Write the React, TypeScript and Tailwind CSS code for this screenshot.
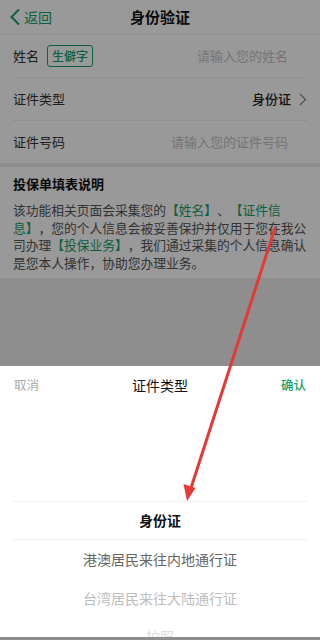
import React from "react";

const G = "text-[#16a06a]";

export default function App() {
  return (
    <div
      className="relative w-[320px] h-[640px] overflow-hidden bg-[#ededed] [text-spacing-trim:space-all]"
      style={{ fontFamily: '"Noto Sans CJK SC", "Noto Sans", sans-serif' }}
    >
      {/* Page */}
      <div className="bg-white">
        <div className="relative h-[35px] flex items-center border-b border-[#eeeeee]">
          <div className={`flex items-center pl-[9px] ${G}`}>
            <svg width="12" height="18" viewBox="0 0 12 18" fill="none">
              <path d="M10 1.5L2.5 9L10 16.5" stroke="#16a06a" strokeWidth="2" />
            </svg>
            <span className="ml-[3px] text-[14px] leading-none">返回</span>
          </div>
          <div className="absolute left-0 right-0 text-center text-[15px] font-bold text-[#111] pointer-events-none">
            身份验证
          </div>
        </div>
        <div className="px-[13px]">
          <div className="h-[43px] flex items-center border-b border-[#eeeeee]">
            <span className="text-[13px] text-[#333]">姓名</span>
            <span className={`ml-[8px] h-[22px] w-[46px] flex items-center justify-center border border-[#16a06a] rounded-[3px] text-[12px] font-medium ${G}`}>
              生僻字
            </span>
            <span className="ml-auto mr-[19px] text-[13px] text-[#c4c4c4]">请输入您的姓名</span>
          </div>
          <div className="h-[43px] flex items-center border-b border-[#eeeeee]">
            <span className="text-[13px] text-[#333]">证件类型</span>
            <span className="ml-auto text-[13px] font-medium text-[#222]">身份证</span>
            <svg className="ml-[8px]" width="8" height="13" viewBox="0 0 8 13" fill="none">
              <path d="M1 1L6.5 6.5L1 12" stroke="#888" strokeWidth="1.2" />
            </svg>
          </div>
          <div className="h-[42px] flex items-center">
            <span className="text-[13px] text-[#333]">证件号码</span>
            <span className="ml-auto mr-[19px] text-[13px] text-[#c4c4c4]">请输入您的证件号码</span>
          </div>
        </div>
      </div>
      <div className="h-[4px]" />
      <div className="bg-white px-[13px] pt-[8px] pb-[7px]">
        <div className="text-[13px] leading-[18px] font-bold text-[#111]">投保单填表说明</div>
        <p className="mt-[8px] text-[12.75px] leading-[17.5px] text-[#555]">
          该功能相关页面会采集您的<span className={G}>【姓名】</span>、<span className={G}>【证件信息】</span>，您的个人信息会被妥善保护并仅用于您在我公司办理<span className={G}>【投保业务】</span>，我们通过采集的个人信息确认是您本人操作，协助您办理业务。
        </p>
      </div>

      {/* Dim overlay */}
      <div className="absolute inset-0 bg-black/40" />

      {/* Bottom sheet */}
      <div className="absolute left-0 right-0 top-[366px] bottom-[3px] bg-white overflow-hidden">
        <div className="relative h-[38px] flex items-center justify-between px-[14px]">
          <span className="text-[12.5px] text-[#aaaaaa]">取消</span>
          <span className="absolute left-0 right-0 text-center text-[14px] text-[#111] pointer-events-none">证件类型</span>
          <span className={`text-[12.5px] font-medium ${G}`}>确认</span>
        </div>
        <div className="pt-[97px] px-[13px]">
          <div className="h-[39px] flex items-center justify-center border-y border-[#f0f0f0] text-[14px] font-bold text-[#111]">
            身份证
          </div>
          <div className="h-[39px] flex items-center justify-center text-[14px] text-[#666]">港澳居民来往内地通行证</div>
          <div className="h-[38px] flex items-center justify-center text-[14px] text-[#bdbdbd]">台湾居民来往大陆通行证</div>
          <div className="h-[38px] flex items-center justify-center text-[14px] text-[#dddddd]">护照</div>
        </div>
      </div>

      {/* Red annotation arrow */}
      <svg className="absolute inset-0 pointer-events-none" width="320" height="640" viewBox="0 0 320 640">
        <line x1="275" y1="228" x2="191" y2="488" stroke="#e53935" strokeWidth="3" strokeLinecap="round" />
        <polygon points="187,501 183.5,484 195.5,488" fill="#e53935" />
      </svg>
    </div>
  );
}
